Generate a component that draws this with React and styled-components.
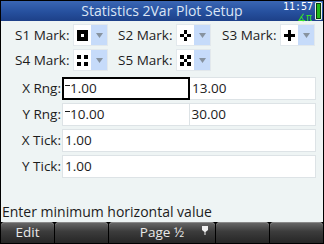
import React from 'react';
import styled, { createGlobalStyle } from 'styled-components';

const GlobalStyle = createGlobalStyle`
  html, body {
    margin: 0;
    padding: 0;
    background: #000;
  }
  * {
    box-sizing: border-box;
  }
`;

const font = `'Open Sans', 'DejaVu Sans', sans-serif`;

const Screen = styled.div`
  width: 324px;
  height: 244px;
  border: 1px solid #000;
  display: flex;
  flex-direction: column;
  background: #eef4f4;
  font-family: ${font};
  color: #1c1c1c;
  overflow: hidden;
`;

const TitleBar = styled.div`
  position: relative;
  height: 20px;
  flex: none;
  display: flex;
  align-items: center;
  justify-content: center;
  background: linear-gradient(#3a66b4, #26509e 55%, #1d4088);
  color: #dbe5f5;
  font-size: 14px;
  line-height: 20px;
`;

const Status = styled.div`
  position: absolute;
  right: 1px;
  top: 1px;
  display: flex;
  align-items: flex-start;
  gap: 2px;
`;

const Clock = styled.div`
  display: flex;
  flex-direction: column;
  align-items: flex-end;
  font-family: 'DejaVu Sans Mono', monospace;
  font-size: 10px;
  line-height: 10px;
  color: #fff;
`;

const Angle = styled.span`
  color: #36e02a;
  font-family: 'DejaVu Sans', sans-serif;
  font-size: 10px;
  line-height: 9px;
  margin-top: 1px;
  margin-right: 1px;
`;

const Battery = styled.div`
  width: 7px;
  height: 18px;
  border: 1px solid #e8f0e8;
  border-radius: 1px;
  background: #1fb81a;
  box-shadow: inset 0 0 0 1px #0b3a0b;
`;

const Main = styled.div`
  flex: 1;
  padding: 3px 7px 0 0;
  display: flex;
  flex-direction: column;
`;

const MarkGrid = styled.div`
  display: grid;
  grid-template-columns: 103px 104px 104px;
  row-gap: 3px;
  padding-left: 14px;
`;

const MarkItem = styled.div`
  display: flex;
  align-items: center;
  gap: 4px;
  height: 22px;
  font-size: 13.5px;
`;

const Select = styled.div`
  display: flex;
  height: 22px;
  border: 1px solid #e2e8ec;
`;

const Swatch = styled.div`
  width: 17px;
  background: #fff;
  display: flex;
  align-items: center;
  justify-content: center;
`;

const Arrow = styled.div`
  width: 16px;
  background: #c6dbfa;
  display: flex;
  align-items: center;
  justify-content: center;
`;

const FieldGrid = styled.div`
  display: grid;
  grid-template-columns: 61px 1fr;
  grid-auto-rows: 23px;
  row-gap: 3px;
  margin-top: 6px;
`;

const Label = styled.div`
  font-size: 13.5px;
  text-align: right;
  line-height: 23px;
  padding-right: 1px;
  white-space: nowrap;
`;

const Fields = styled.div`
  display: flex;
`;

const Field = styled.div`
  flex: 1;
  background: #fff;
  border: ${p => (p.$active ? '2px solid #000' : '1px solid #dde3e6')};
  margin-left: ${p => (p.$joined ? '-1px' : '0')};
  padding-left: ${p => (p.$active ? '1px' : '2px')};
  font-size: 13.5px;
  line-height: ${p => (p.$active ? '19px' : '21px')};
  white-space: nowrap;
  position: relative;
  z-index: ${p => (p.$active ? 1 : 0)};
`;

const Minus = styled.span`
  display: inline-block;
  width: 5px;
  height: 1px;
  background: #1c1c1c;
  vertical-align: 7px;
`;

const Prompt = styled.div`
  flex: none;
  font-size: 14px;
  line-height: 16px;
  padding-left: 1px;
  margin-bottom: 2px;
`;

const Menu = styled.div`
  flex: none;
  height: 21px;
  display: flex;
  gap: 1px;
  background: #000;
`;

const MenuButton = styled.div`
  flex: ${p => p.$span || 1};
  border-radius: 4px 4px 0 0;
  background: linear-gradient(#6a6a6a, #3c3c3c 45%, #262626);
  box-shadow: inset 0 1px 0 #8a8a8a;
  color: #e8e8e8;
  font-size: 13.5px;
  line-height: 21px;
  display: flex;
  align-items: center;
  justify-content: center;
  position: relative;
`;

const Pin = styled.svg`
  position: absolute;
  right: 7px;
  top: 4px;
`;

const marks = {
  S1: [[1, 1, 1], [1, 0, 1], [1, 1, 1]],
  S2: [[0, 1, 0], [1, 0, 1], [0, 1, 0]],
  S3: [[0, 1, 0], [1, 1, 1], [0, 1, 0]],
  S4: [[1, 0, 1], [0, 0, 0], [1, 0, 1]],
  S5: [[1, 0, 1], [0, 1, 0], [1, 0, 1]],
};

const cellPos = [0, 4, 7];
const cellSize = [4, 3, 4];

const MarkIcon = ({ pattern }) => (
  <svg width="11" height="11" viewBox="0 0 11 11" shapeRendering="crispEdges">
    {pattern.map((row, r) =>
      row.map((on, c) =>
        on ? (
          <rect
            key={`${r}-${c}`}
            x={cellPos[c]}
            y={cellPos[r]}
            width={cellSize[c]}
            height={cellSize[r]}
            fill="#000"
          />
        ) : null
      )
    )}
  </svg>
);

const Mark = ({ name }) => (
  <MarkItem>
    {name} Mark:
    <Select>
      <Swatch>
        <MarkIcon pattern={marks[name]} />
      </Swatch>
      <Arrow>
        <svg width="7" height="5" viewBox="0 0 7 5">
          <path d="M0 0 H7 L3.5 5 Z" fill="#8793a0" />
        </svg>
      </Arrow>
    </Select>
  </MarkItem>
);

const Neg = ({ value }) => (
  <>
    <Minus />
    {value}
  </>
);

const App = () => (
  <Screen>
    <GlobalStyle />
    <TitleBar>
      Statistics 2Var Plot Setup
      <Status>
        <Clock>
          11:57
          <Angle>∡π</Angle>
        </Clock>
        <Battery />
      </Status>
    </TitleBar>
    <Main>
      <MarkGrid>
        <Mark name="S1" />
        <Mark name="S2" />
        <Mark name="S3" />
        <Mark name="S4" />
        <Mark name="S5" />
      </MarkGrid>
      <FieldGrid>
        <Label>X Rng:</Label>
        <Fields>
          <Field $active>
            <Neg value="1.00" />
          </Field>
          <Field $joined>13.00</Field>
        </Fields>
        <Label>Y Rng:</Label>
        <Fields>
          <Field>
            <Neg value="10.00" />
          </Field>
          <Field $joined>30.00</Field>
        </Fields>
        <Label>X Tick:</Label>
        <Fields>
          <Field>1.00</Field>
        </Fields>
        <Label>Y Tick:</Label>
        <Fields>
          <Field>1.00</Field>
        </Fields>
      </FieldGrid>
    </Main>
    <Prompt>Enter minimum horizontal value</Prompt>
    <Menu>
      <MenuButton>Edit</MenuButton>
      <MenuButton />
      <MenuButton $span={2}>
        Page ½
        <Pin width="6" height="9" viewBox="0 0 6 9">
          <path d="M0 0 H6 V4 L3.5 6 V9 H2.5 V6 L0 4 Z" fill="#f0f0f0" />
        </Pin>
      </MenuButton>
      <MenuButton />
      <MenuButton />
    </Menu>
  </Screen>
);

export default App;
